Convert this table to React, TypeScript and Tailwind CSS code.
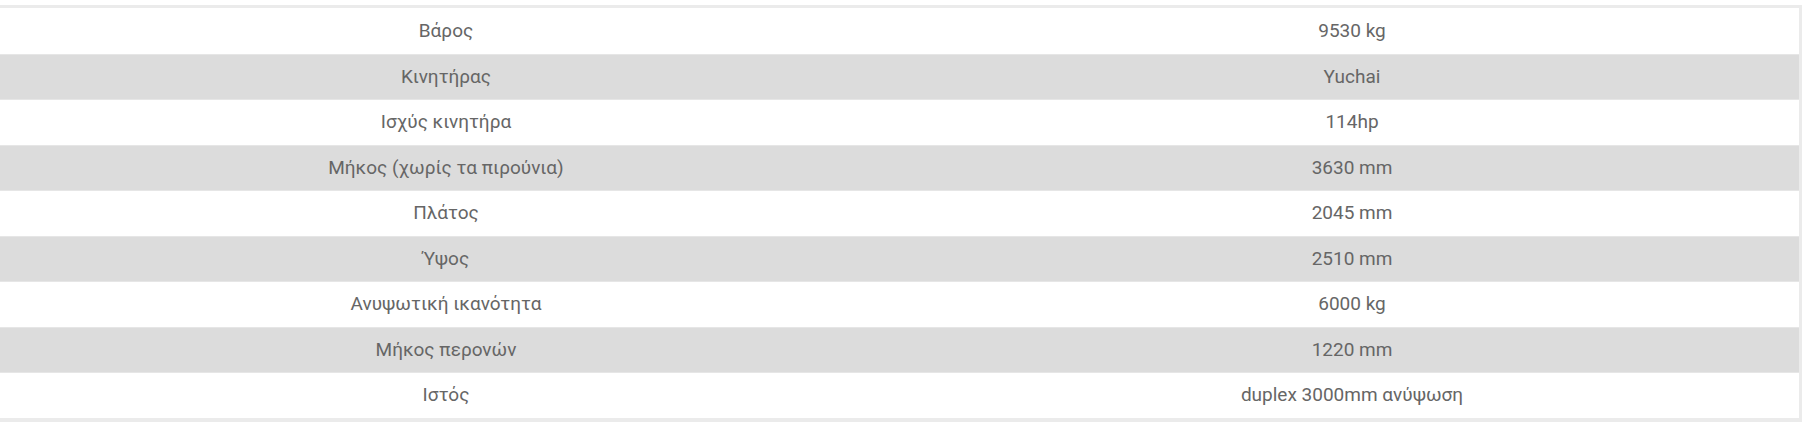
import React from "react";

const rows: [string, string][] = [
  ["Βάρος", "9530 kg"],
  ["Κινητήρας", "Yuchai"],
  ["Ισχύς κινητήρα", "114hp"],
  ["Μήκος (χωρίς τα πιρούνια)", "3630 mm"],
  ["Πλάτος", "2045 mm"],
  ["Ύψος", "2510 mm"],
  ["Ανυψωτική ικανότητα", "6000 kg"],
  ["Μήκος περονών", "1220 mm"],
  ["Ιστός", "duplex 3000mm ανύψωση"],
];

export default function App() {
  return (
    <div className="w-[1804px] h-[430px] bg-white overflow-hidden pt-[5px]">
      <div
        className="ml-[-13px] w-[1815px] border-t-[3px] border-r-[3px] border-b-[4px] border-[#ebebeb] text-[19px] text-[#666666]"
        style={{ fontFamily: "Roboto, 'Noto Sans', sans-serif" }}
      >
        {rows.map(([k, v], i) => (
          <div
            key={i}
            className={
              "flex h-[45.5px] items-center " +
              (i > 0 ? "border-t border-[#e6e6e6] " : "") +
              (i % 2 === 1 ? "bg-[#dcdcdc]" : "bg-white")
            }
          >
            <div className="w-[918px] text-center">{k}</div>
            <div className="flex-1 text-center">{v}</div>
          </div>
        ))}
      </div>
    </div>
  );
}
